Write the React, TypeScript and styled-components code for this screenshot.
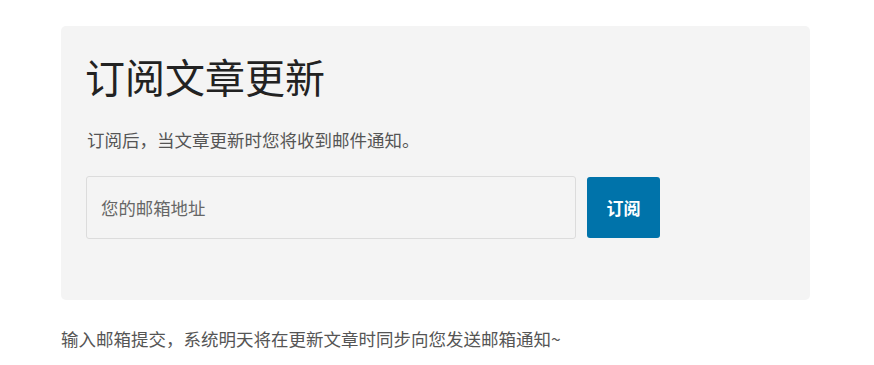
import React from 'react';
import styled, { createGlobalStyle } from 'styled-components';

const GlobalStyle = createGlobalStyle`
  body {
    margin: 0;
    background: #fff;
    font-family: "Noto Sans CJK SC", "Noto Sans", sans-serif;
  }
`;

const Page = styled.div`
  width: 749px;
  margin-left: 61px;
  padding-top: 26px;
`;

const Card = styled.section`
  background: #f4f4f4;
  border-radius: 5px;
  padding: 24px 25px 61px;
`;

const Title = styled.h2`
  margin: 0 0 0 -1px;
  font-size: 40px;
  font-weight: 400;
  line-height: 52px;
  color: #222;
`;

const Intro = styled.p`
  margin: 24px 0 0 1px;
  font-size: 17.5px;
  line-height: 28px;
  color: #555;
`;

const Form = styled.form`
  display: flex;
  align-items: center;
  gap: 11px;
  margin-top: 22px;
`;

const EmailInput = styled.input`
  box-sizing: border-box;
  width: 490px;
  height: 63px;
  padding: 0 14px;
  border: 1px solid #dcdcdc;
  border-radius: 3px;
  background: #f4f4f4;
  font-family: inherit;
  font-size: 17.4px;
  color: #333;
  outline: none;

  &::placeholder {
    color: #666;
  }
`;

const SubmitButton = styled.button`
  width: 73px;
  height: 61px;
  border: 0;
  border-radius: 3px;
  background: #0073aa;
  color: #fff;
  font-family: inherit;
  font-size: 17px;
  font-weight: 700;
  cursor: pointer;
`;

const Note = styled.p`
  margin: 25px 0 0;
  font-size: 17.5px;
  line-height: 28px;
  color: #555;
`;

export default function App() {
  return (
    <>
      <GlobalStyle />
      <Page>
        <Card>
          <Title>订阅文章更新</Title>
          <Intro>订阅后，当文章更新时您将收到邮件通知。</Intro>
          <Form onSubmit={(e) => e.preventDefault()}>
            <EmailInput type="email" placeholder="您的邮箱地址" />
            <SubmitButton type="submit">订阅</SubmitButton>
          </Form>
        </Card>
        <Note>输入邮箱提交，系统明天将在更新文章时同步向您发送邮箱通知~</Note>
      </Page>
    </>
  );
}
